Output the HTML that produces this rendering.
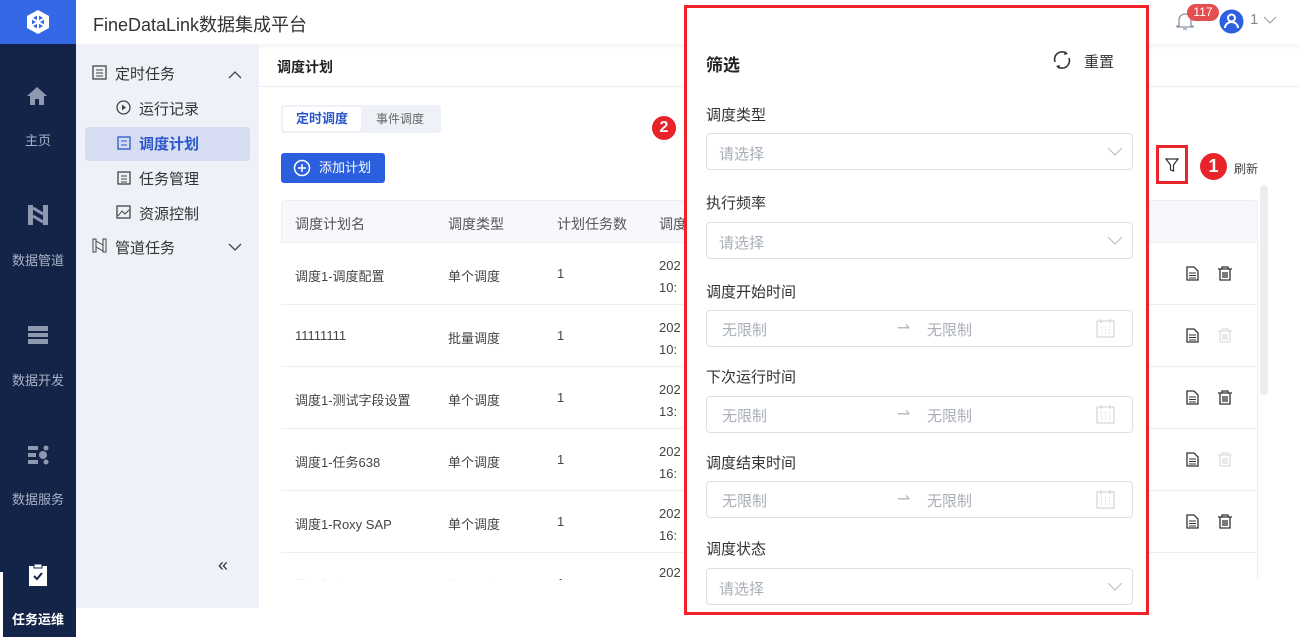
<!DOCTYPE html>
<html><head><meta charset="utf-8">
<style>
*{margin:0;padding:0;box-sizing:border-box}
body{width:1300px;height:637px;overflow:hidden;background:#fff;font-family:"Liberation Sans","Noto Sans CJK SC",sans-serif;position:relative;color:#333}
.a{position:absolute}
.rail{left:0;top:0;width:76px;height:637px;background:#142449}
.logo{left:0;top:0;width:76px;height:44px;background:#3568e6}
.ri{width:76px;text-align:center;color:#a8b2c6;font-size:13px}
.top{left:76px;top:0;width:1224px;height:44px;background:#fff;box-shadow:0 2px 4px rgba(0,0,0,.05)}
.nav{left:76px;top:44px;width:183px;height:564px;background:#eef1f7}
.ni{font-size:15px;color:#333;}
.lbl{font-size:15px;color:#333;left:706px}
.inp{left:706px;width:427px;height:37px;border:1px solid #dde0e7;border-radius:4px;background:#fff}
.ph{color:#a9aeb8;font-size:15px}
.row{left:281px;width:977px;height:62px;border-bottom:1px solid #eceef3}
.c{position:absolute;font-size:13px;color:#444}
</style></head><body>
<div class="a rail"></div>
<div class="a logo"><svg class="a" style="left:25px;top:9px" width="26" height="26" viewBox="0 0 26 26"><path d="M13 1 L24 7 L24 19 L13 25 L2 19 L2 7 Z" fill="#fff"/><path d="M13 6 L19 9.5 L19 16.5 L13 20 L7 16.5 L7 9.5Z" fill="#3568e6"/><path d="M13 6V20M7 9.5L19 16.5M19 9.5L7 16.5" stroke="#fff" stroke-width="2"/></svg></div>
<svg class="a" style="left:26px;top:86px" width="22" height="20" viewBox="0 0 22 20"><path d="M11 1 L21 10 H18 V19 H13 V13 H9 V19 H4 V10 H1 Z" fill="#8e99b0"/></svg>
<div class="a ri" style="top:130px">主页</div>
<svg class="a" style="left:27px;top:204px" width="22" height="22" viewBox="0 0 22 22"><rect x="1" y="1" width="5" height="20" fill="#8e99b0"/><rect x="16" y="1" width="5" height="20" fill="#8e99b0"/><path d="M6 4 L16 10 M6 12 L16 18" stroke="#8e99b0" stroke-width="3"/></svg>
<div class="a ri" style="top:250px">数据管道</div>
<svg class="a" style="left:27px;top:325px" width="22" height="20" viewBox="0 0 22 20"><rect x="1" y="1" width="20" height="5" fill="#8e99b0"/><rect x="1" y="8" width="20" height="4" fill="#8e99b0"/><rect x="1" y="14" width="20" height="5" fill="#8e99b0"/></svg>
<div class="a ri" style="top:370px">数据开发</div>
<svg class="a" style="left:27px;top:445px" width="22" height="20" viewBox="0 0 22 20"><rect x="1" y="1" width="10" height="4" fill="#8e99b0"/><rect x="1" y="8" width="8" height="4" fill="#8e99b0"/><rect x="1" y="15" width="10" height="4" fill="#8e99b0"/><circle cx="16" cy="10" r="4" fill="#8e99b0"/><circle cx="19" cy="3" r="2.5" fill="#8e99b0"/><circle cx="19" cy="17" r="2.5" fill="#8e99b0"/></svg>
<div class="a ri" style="top:489px">数据服务</div>
<div class="a" style="left:0;top:572px;width:3px;height:65px;background:#fff"></div>
<svg class="a" style="left:28px;top:563px" width="20" height="24" viewBox="0 0 20 24"><rect x="1" y="3" width="18" height="20" fill="#fff"/><rect x="6" y="1" width="8" height="4" fill="#fff" stroke="#142449" stroke-width="1"/><path d="M6 13 L9 16 L14 10" stroke="#142449" stroke-width="2" fill="none"/></svg>
<div class="a ri" style="top:609px;color:#fff;font-weight:bold">任务运维</div>

<div class="a top"></div>
<div class="a" style="left:93px;top:11px;font-size:18px;color:#333">FineDataLink数据集成平台</div>
<div class="a" style="left:1075px;top:12px;font-size:13px;color:#555">简体中文 ∨</div>
<svg class="a" style="left:1176px;top:11px" width="18" height="20" viewBox="0 0 18 20"><path d="M3 15 V9 a6 6 0 0 1 12 0 V15 H17 V16 H1 V15 Z M7 18 h4" stroke="#8a93a5" fill="none" stroke-width="1.3"/></svg>
<div class="a" style="left:1187px;top:4px;width:32px;height:17px;border-radius:9px;background:#e34f4f;color:#fff;font-size:12px;text-align:center;line-height:17px">117</div>
<svg class="a" style="left:1219px;top:9px" width="25" height="25" viewBox="0 0 25 25"><circle cx="12.5" cy="12.5" r="12" fill="#2f5ee0"/><circle cx="12.5" cy="9" r="3.5" fill="none" stroke="#fff" stroke-width="2"/><path d="M6 19 a6.5 6 0 0 1 13 0" fill="none" stroke="#fff" stroke-width="2"/></svg>
<div class="a" style="left:1250px;top:11px;font-size:15px;color:#888">1</div>
<svg class="a" style="left:1263px;top:16px" width="14" height="8"><path d="M1 1 L7 7 L13 1" stroke="#999" fill="none"/></svg>

<div class="a nav"></div>
<svg class="a" style="left:92px;top:65px" width="15" height="15"><rect x="1" y="1" width="13" height="13" fill="none" stroke="#444" stroke-width="1.3"/><path d="M4 5h7M4 8h7M4 11h7" stroke="#444"/></svg>
<div class="a ni" style="left:115px;top:63px">定时任务</div>
<svg class="a" style="left:228px;top:71px" width="14" height="8"><path d="M1 7 L7 1 L13 7" stroke="#444" fill="none" stroke-width="1.3"/></svg>
<svg class="a" style="left:116px;top:100px" width="15" height="15"><circle cx="7.5" cy="7.5" r="6.5" fill="none" stroke="#444" stroke-width="1.3"/><path d="M6 4.5 L10 7.5 L6 10.5Z" fill="#444"/></svg>
<div class="a ni" style="left:139px;top:98px">运行记录</div>
<div class="a" style="left:85px;top:127px;width:165px;height:34px;background:#d6dcf2;border-radius:4px"></div>
<svg class="a" style="left:117px;top:136px" width="14" height="14"><rect x="1" y="1" width="12" height="12" fill="none" stroke="#2c57c8" stroke-width="1.3"/><path d="M4 5h6M4 9h6" stroke="#2c57c8"/></svg>
<div class="a ni" style="left:139px;top:133px;color:#2c57c8;font-weight:bold">调度计划</div>
<svg class="a" style="left:117px;top:170px" width="14" height="15"><rect x="1" y="2" width="12" height="12" fill="none" stroke="#444" stroke-width="1.3"/><path d="M4 6h6M4 9h6M4 12h6" stroke="#444"/></svg>
<div class="a ni" style="left:139px;top:168px">任务管理</div>
<svg class="a" style="left:116px;top:205px" width="15" height="14"><rect x="1" y="1" width="13" height="12" fill="none" stroke="#444" stroke-width="1.3"/><path d="M2 11 L6 6 L9 9 L13 5" stroke="#444" fill="none"/></svg>
<div class="a ni" style="left:139px;top:203px">资源控制</div>
<svg class="a" style="left:92px;top:238px" width="15" height="15"><rect x="1" y="1" width="3" height="13" fill="none" stroke="#444"/><rect x="11" y="1" width="3" height="13" fill="none" stroke="#444"/><path d="M4 3 L11 7 M4 9 L11 13" stroke="#444"/></svg>
<div class="a ni" style="left:115px;top:237px">管道任务</div>
<svg class="a" style="left:228px;top:243px" width="14" height="8"><path d="M1 1 L7 7 L13 1" stroke="#444" fill="none" stroke-width="1.3"/></svg>
<div class="a" style="left:218px;top:555px;font-size:18px;color:#333">«</div>

<div class="a" style="left:277px;top:57px;font-size:14px;font-weight:bold;color:#222">调度计划</div>
<div class="a" style="left:259px;top:86px;width:1041px;height:1px;background:#eceef3"></div>
<div class="a" style="left:281px;top:105px;width:160px;height:28px;background:#eef1f7;border-radius:3px"></div>
<div class="a" style="left:283px;top:107px;width:78px;height:24px;background:#fff;border-radius:3px;color:#2c57c8;font-size:13px;font-weight:bold;text-align:center;line-height:24px">定时调度</div>
<div class="a" style="left:361px;top:107px;width:78px;height:24px;color:#666;font-size:12px;text-align:center;line-height:24px">事件调度</div>
<div class="a" style="left:281px;top:153px;width:104px;height:30px;background:#2c5fde;border-radius:3px;color:#fff;font-size:13px;line-height:30px;padding-left:38px">添加计划</div>
<svg class="a" style="left:293px;top:159px" width="18" height="18"><circle cx="9" cy="9" r="7.5" fill="none" stroke="#fff" stroke-width="1.5"/><path d="M9 5v8M5 9h8" stroke="#fff" stroke-width="1.5"/></svg>
<div class="a" style="left:652px;top:116px;width:24px;height:24px;border-radius:50%;background:#e8232a;color:#fff;font-size:16px;font-weight:bold;text-align:center;line-height:24px">2</div>

<div class="a" style="left:281px;top:200px;width:977px;height:43px;background:#f7f8fb;border:1px solid #eceef3;border-radius:4px 4px 0 0"></div>
<div class="c" style="left:295px;top:214px;color:#555;font-size:14px">调度计划名</div>
<div class="c" style="left:448px;top:214px;color:#555;font-size:14px">调度类型</div>
<div class="c" style="left:557px;top:214px;color:#555;font-size:14px">计划任务数</div>
<div class="c" style="left:659px;top:214px;color:#555;font-size:14px">调度</div>
<div class="a" style="left:1257px;top:200px;width:1px;height:380px;background:#eceef3"></div>
<div class="a" style="left:1260px;top:185px;width:8px;height:210px;background:#eceef2;border-radius:4px"></div>

<div class="a row" style="top:243px"><div class="c" style="left:14px;top:23px">调度1-调度配置</div><div class="c" style="left:167px;top:23px">单个调度</div><div class="c" style="left:276px;top:23px">1</div><div class="c" style="left:378px;top:12px;line-height:22px">202<br>10:</div></div>
<div class="a row" style="top:305px"><div class="c" style="left:14px;top:23px">11111111</div><div class="c" style="left:167px;top:23px">批量调度</div><div class="c" style="left:276px;top:23px">1</div><div class="c" style="left:378px;top:12px;line-height:22px">202<br>10:</div></div>
<div class="a row" style="top:367px"><div class="c" style="left:14px;top:23px">调度1-测试字段设置</div><div class="c" style="left:167px;top:23px">单个调度</div><div class="c" style="left:276px;top:23px">1</div><div class="c" style="left:378px;top:12px;line-height:22px">202<br>13:</div></div>
<div class="a row" style="top:429px"><div class="c" style="left:14px;top:23px">调度1-任务638</div><div class="c" style="left:167px;top:23px">单个调度</div><div class="c" style="left:276px;top:23px">1</div><div class="c" style="left:378px;top:12px;line-height:22px">202<br>16:</div></div>
<div class="a row" style="top:491px"><div class="c" style="left:14px;top:23px">调度1-Roxy SAP</div><div class="c" style="left:167px;top:23px">单个调度</div><div class="c" style="left:276px;top:23px">1</div><div class="c" style="left:378px;top:12px;line-height:22px">202<br>16:</div></div>
<div class="a" style="left:281px;top:553px;width:977px;height:27px;overflow:hidden"><div class="c" style="left:14px;top:23px">执行频率</div><div class="c" style="left:167px;top:23px">批量调度</div><div class="c" style="left:276px;top:23px">1</div><div class="c" style="left:378px;top:12px">202</div></div>

<svg class="a" style="left:1186px;top:266px" width="13" height="15"><path d="M1 1H8L12 5V14H1Z" fill="none" stroke="#333" stroke-width="1.3"/><path d="M3 7h7M3 9.5h7M3 12h7" stroke="#333"/></svg>
<svg class="a" style="left:1217px;top:266px" width="16" height="15"><path d="M1 3h14M5 3V1h6v2M3 3V14H13V3M6 6v6M8 6v6M10 6v6" fill="none" stroke="#333" stroke-width="1.3"/></svg>
<svg class="a" style="left:1186px;top:328px" width="13" height="15"><path d="M1 1H8L12 5V14H1Z" fill="none" stroke="#333" stroke-width="1.3"/><path d="M3 7h7M3 9.5h7M3 12h7" stroke="#333"/></svg>
<svg class="a" style="left:1217px;top:328px" width="16" height="15"><path d="M1 3h14M5 3V1h6v2M3 3V14H13V3M6 6v6M8 6v6M10 6v6" fill="none" stroke="#ddd" stroke-width="1.3"/></svg>
<svg class="a" style="left:1186px;top:390px" width="13" height="15"><path d="M1 1H8L12 5V14H1Z" fill="none" stroke="#333" stroke-width="1.3"/><path d="M3 7h7M3 9.5h7M3 12h7" stroke="#333"/></svg>
<svg class="a" style="left:1217px;top:390px" width="16" height="15"><path d="M1 3h14M5 3V1h6v2M3 3V14H13V3M6 6v6M8 6v6M10 6v6" fill="none" stroke="#333" stroke-width="1.3"/></svg>
<svg class="a" style="left:1186px;top:452px" width="13" height="15"><path d="M1 1H8L12 5V14H1Z" fill="none" stroke="#333" stroke-width="1.3"/><path d="M3 7h7M3 9.5h7M3 12h7" stroke="#333"/></svg>
<svg class="a" style="left:1217px;top:452px" width="16" height="15"><path d="M1 3h14M5 3V1h6v2M3 3V14H13V3M6 6v6M8 6v6M10 6v6" fill="none" stroke="#ddd" stroke-width="1.3"/></svg>
<svg class="a" style="left:1186px;top:514px" width="13" height="15"><path d="M1 1H8L12 5V14H1Z" fill="none" stroke="#333" stroke-width="1.3"/><path d="M3 7h7M3 9.5h7M3 12h7" stroke="#333"/></svg>
<svg class="a" style="left:1217px;top:514px" width="16" height="15"><path d="M1 3h14M5 3V1h6v2M3 3V14H13V3M6 6v6M8 6v6M10 6v6" fill="none" stroke="#333" stroke-width="1.3"/></svg>

<div class="a" style="left:1156px;top:145px;width:32px;height:39px;border:3px solid #e8232a"></div>
<svg class="a" style="left:1165px;top:158px" width="14" height="14"><path d="M1 1H13L8.5 7V13L5.5 12V7Z" fill="none" stroke="#333" stroke-width="1.2"/></svg>
<div class="a" style="left:1200px;top:153px;width:27px;height:27px;border-radius:50%;background:#e8232a;color:#fff;font-size:18px;font-weight:bold;text-align:center;line-height:27px">1</div>
<div class="a" style="left:1234px;top:160px;font-size:12px;color:#444">刷新</div>

<div class="a" style="left:684px;top:5px;width:465px;height:610px;background:#fff;border:3px solid #f0232b"></div>
<div class="a" style="left:706px;top:51px;font-size:17px;font-weight:bold;color:#222">筛选</div>
<svg class="a" style="left:1052px;top:50px" width="20" height="20" viewBox="0 0 20 20"><path d="M3 12 A7.5 7.5 0 0 1 14 3" fill="none" stroke="#333" stroke-width="1.6"/><path d="M17 8 A7.5 7.5 0 0 1 6 17" fill="none" stroke="#333" stroke-width="1.6"/><path d="M13 1 L16 4 L12 5Z M7 19 L4 16 L8 15Z" fill="#333"/></svg>
<div class="a" style="left:1084px;top:51px;font-size:15px;color:#333">重置</div>

<div class="a lbl" style="top:104px">调度类型</div>
<div class="a inp" style="top:133px"><span class="a ph" style="left:12px;top:9px">请选择</span><svg class="a" style="left:400px;top:13px" width="16" height="10"><path d="M1 1L8 8L15 1" stroke="#bbb" fill="none"/></svg></div>
<div class="a lbl" style="top:192px">执行频率</div>
<div class="a inp" style="top:222px"><span class="a ph" style="left:12px;top:9px">请选择</span><svg class="a" style="left:400px;top:13px" width="16" height="10"><path d="M1 1L8 8L15 1" stroke="#bbb" fill="none"/></svg></div>
<div class="a lbl" style="top:281px">调度开始时间</div>
<div class="a inp" style="top:310px"><span class="a ph" style="left:15px;top:8px">无限制</span><span class="a" style="left:190px;top:7px;color:#bbb">⇀</span><span class="a ph" style="left:220px;top:8px">无限制</span><svg class="a" style="left:389px;top:7px" width="19" height="20"><rect x="1" y="3" width="17" height="16" fill="none" stroke="#ccc"/><path d="M5 1v4M14 1v4M5 9h1M9 9h1M13 9h1M5 12h1M9 12h1M13 12h1M5 15h1M9 15h1M13 15h1" stroke="#ccc"/></svg></div>
<div class="a lbl" style="top:366px">下次运行时间</div>
<div class="a inp" style="top:396px"><span class="a ph" style="left:15px;top:8px">无限制</span><span class="a" style="left:190px;top:7px;color:#bbb">⇀</span><span class="a ph" style="left:220px;top:8px">无限制</span><svg class="a" style="left:389px;top:7px" width="19" height="20"><rect x="1" y="3" width="17" height="16" fill="none" stroke="#ccc"/><path d="M5 1v4M14 1v4M5 9h1M9 9h1M13 9h1M5 12h1M9 12h1M13 12h1M5 15h1M9 15h1M13 15h1" stroke="#ccc"/></svg></div>
<div class="a lbl" style="top:452px">调度结束时间</div>
<div class="a inp" style="top:481px"><span class="a ph" style="left:15px;top:8px">无限制</span><span class="a" style="left:190px;top:7px;color:#bbb">⇀</span><span class="a ph" style="left:220px;top:8px">无限制</span><svg class="a" style="left:389px;top:7px" width="19" height="20"><rect x="1" y="3" width="17" height="16" fill="none" stroke="#ccc"/><path d="M5 1v4M14 1v4M5 9h1M9 9h1M13 9h1M5 12h1M9 12h1M13 12h1M5 15h1M9 15h1M13 15h1" stroke="#ccc"/></svg></div>
<div class="a lbl" style="top:538px">调度状态</div>
<div class="a inp" style="top:568px"><span class="a ph" style="left:12px;top:9px">请选择</span><svg class="a" style="left:400px;top:13px" width="16" height="10"><path d="M1 1L8 8L15 1" stroke="#bbb" fill="none"/></svg></div>
</body></html>
